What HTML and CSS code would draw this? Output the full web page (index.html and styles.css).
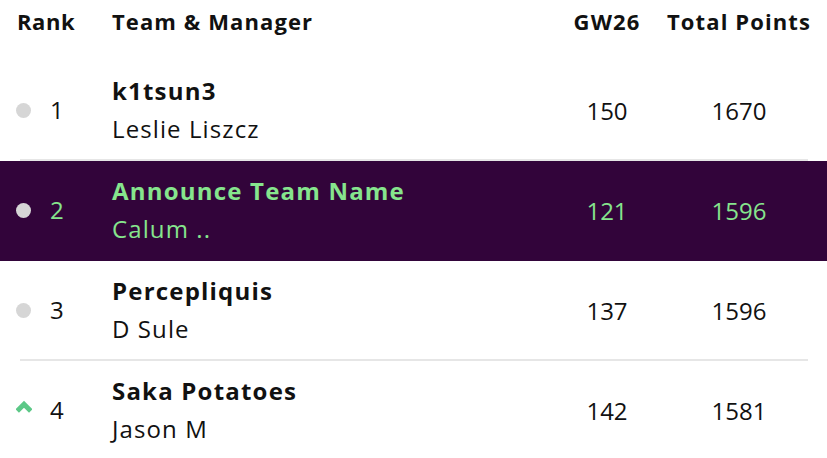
FILE: index.html
```html
<!DOCTYPE html>
<html lang="en">
<head>
<meta charset="utf-8">
<title>League Standings</title>
<link rel="stylesheet" href="styles.css">
</head>
<body>
<div class="standings">
  <div class="head">
    <div class="h-rank">Rank</div>
    <div class="h-team">Team &amp; Manager</div>
    <div class="h-num">GW26</div>
    <div class="h-num">Total Points</div>
  </div>

  <div class="row">
    <div class="rank"><span class="dot"></span><span class="pos">1</span></div>
    <div class="team"><div class="tname">k1tsun3</div><div class="mname">Leslie Liszcz</div></div>
    <div class="num">150</div>
    <div class="num">1670</div>
  </div>

  <div class="row mine">
    <div class="rank"><span class="dot"></span><span class="pos">2</span></div>
    <div class="team"><div class="tname">Announce Team Name</div><div class="mname">Calum ..</div></div>
    <div class="num">121</div>
    <div class="num">1596</div>
  </div>

  <div class="row">
    <div class="rank"><span class="dot"></span><span class="pos">3</span></div>
    <div class="team"><div class="tname">Percepliquis</div><div class="mname">D Sule</div></div>
    <div class="num">137</div>
    <div class="num">1596</div>
  </div>

  <div class="row">
    <div class="rank"><svg class="up" width="16" height="13" viewBox="0 0 16 13"><path d="M1.2 11 L8 4.2 L14.8 11" fill="none" stroke="#5cc887" stroke-width="5"/></svg><span class="pos">4</span></div>
    <div class="team"><div class="tname">Saka Potatoes</div><div class="mname">Jason M</div></div>
    <div class="num">142</div>
    <div class="num">1581</div>
  </div>
</div>
</body>
</html>
```

FILE: styles.css
```css
html, body {
  margin: 0;
  padding: 0;
  background: #ffffff;
}

body {
  font-family: "Open Sans", "Liberation Sans", sans-serif;
  color: #111111;
  width: 827px;
  height: 458px;
  overflow: hidden;
}

.standings {
  display: flex;
  flex-direction: column;
}

.head,
.row {
  display: grid;
  grid-template-columns: 112px 447px 96px 168px;
  padding-right: 4px;
  align-items: center;
}

.head {
  height: 42px;
  padding-bottom: 19px;
  font-weight: 700;
  font-size: 22px;
  letter-spacing: 1.1px;
}

.h-rank {
  padding-left: 17px;
  letter-spacing: 0.6px;
}

.h-num {
  text-align: center;
}

.row {
  height: 100px;
  box-sizing: border-box;
  padding-bottom: 2px;
  background: linear-gradient(#e6e6e6, #e6e6e6) no-repeat 20px 100% / 788px 2px;
  font-size: 24px;
}

.row.mine {
  background: #32043a;
  color: #86e58d;
}

.rank {
  display: flex;
  align-items: center;
  padding-left: 16px;
}

.dot {
  width: 15px;
  height: 15px;
  border-radius: 50%;
  background: #d6d6d6;
  margin-right: 19px;
  flex: none;
}

.up {
  display: block;
  margin-right: 18px;
  margin-top: -8px;
  flex: none;
}

.pos {
  line-height: 1;
}

.team {
  display: flex;
  flex-direction: column;
  padding-top: 0;
}

.tname {
  font-weight: 700;
  line-height: 38px;
  letter-spacing: 1.2px;
}

.mname {
  line-height: 38px;
  letter-spacing: 1.1px;
}

.num {
  text-align: center;
}
```
